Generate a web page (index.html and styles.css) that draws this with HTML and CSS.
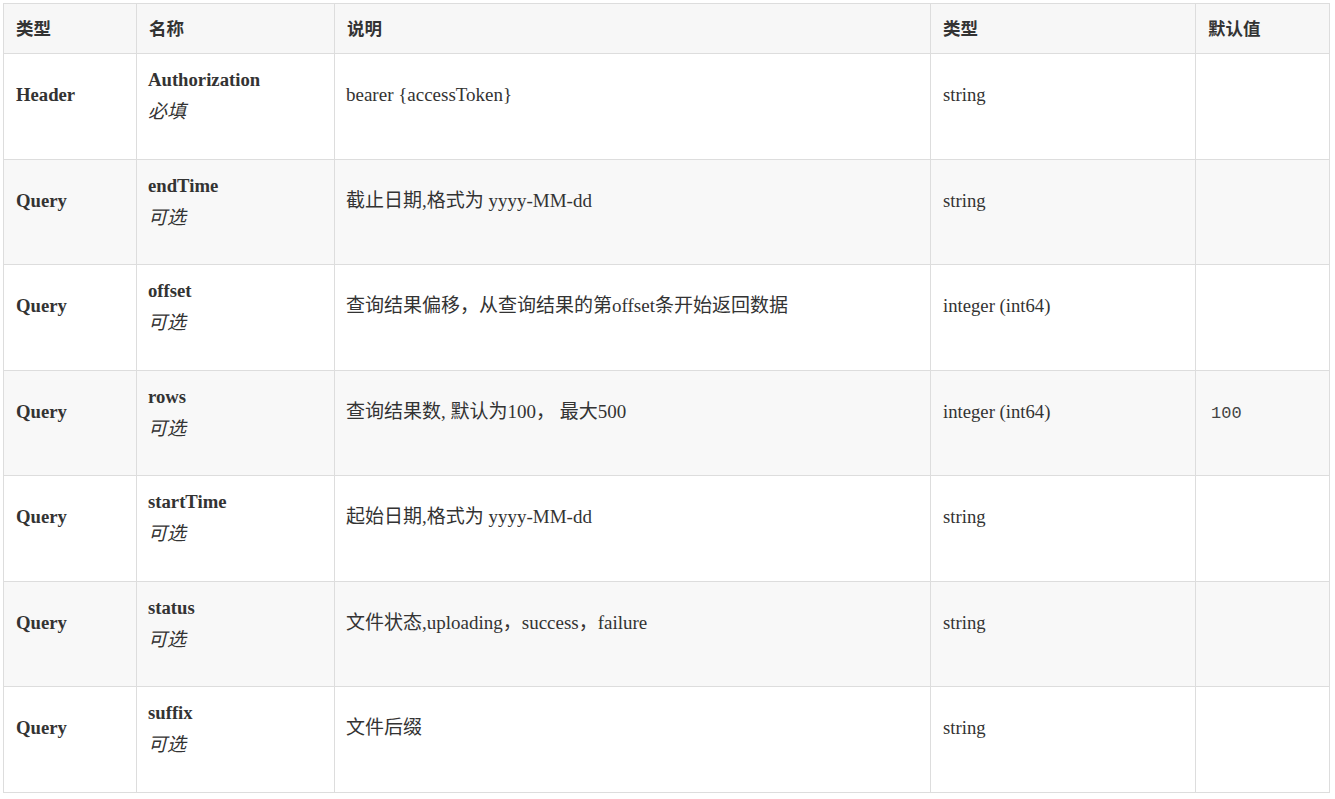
FILE: index.html
```html
<!DOCTYPE html>
<html lang="zh-CN">
<head>
<meta charset="utf-8">
<title>参数</title>
<link rel="stylesheet" href="styles.css">
</head>
<body>
<table class="params">
  <colgroup>
    <col class="c-in">
    <col class="c-name">
    <col class="c-desc">
    <col class="c-type">
    <col class="c-def">
  </colgroup>
  <thead>
    <tr><th>类型</th><th>名称</th><th>说明</th><th>类型</th><th>默认值</th></tr>
  </thead>
  <tbody>
    <tr>
      <td class="in">Header</td>
      <td class="name"><strong>Authorization</strong><br><em>必填</em></td>
      <td class="desc">bearer {accessToken}</td>
      <td>string</td>
      <td></td>
    </tr>
    <tr>
      <td class="in">Query</td>
      <td class="name"><strong>endTime</strong><br><em>可选</em></td>
      <td class="desc">截止日期,格式为 yyyy-MM-dd</td>
      <td>string</td>
      <td></td>
    </tr>
    <tr>
      <td class="in">Query</td>
      <td class="name"><strong>offset</strong><br><em>可选</em></td>
      <td class="desc">查询结果偏移，从查询结果的第offset条开始返回数据</td>
      <td>integer (int64)</td>
      <td></td>
    </tr>
    <tr>
      <td class="in">Query</td>
      <td class="name"><strong>rows</strong><br><em>可选</em></td>
      <td class="desc">查询结果数, 默认为100， 最大500</td>
      <td>integer (int64)</td>
      <td><code>100</code></td>
    </tr>
    <tr>
      <td class="in">Query</td>
      <td class="name"><strong>startTime</strong><br><em>可选</em></td>
      <td class="desc">起始日期,格式为 yyyy-MM-dd</td>
      <td>string</td>
      <td></td>
    </tr>
    <tr>
      <td class="in">Query</td>
      <td class="name"><strong>status</strong><br><em>可选</em></td>
      <td class="desc">文件状态,uploading，success，failure</td>
      <td>string</td>
      <td></td>
    </tr>
    <tr>
      <td class="in">Query</td>
      <td class="name"><strong>suffix</strong><br><em>可选</em></td>
      <td class="desc">文件后缀</td>
      <td>string</td>
      <td></td>
    </tr>
  </tbody>
</table>
</body>
</html>
```
FILE: styles.css
```css
html, body {
  margin: 0;
  padding: 0;
  background: #ffffff;
}
body {
  padding: 3px 0 0 3px;
  color: #333333;
  font-family: "Liberation Serif", "Noto Sans CJK SC", serif;
  font-size: 18.7px;
}
.params {
  border-collapse: collapse;
  table-layout: fixed;
  width: 1326px;
}
.c-in { width: 133px; }
.c-name { width: 198px; }
.c-desc { width: 596px; }
.c-type { width: 265px; }
.c-def { width: 134px; }

.params th,
.params td {
  border: 1px solid #dddddd;
  text-align: left;
  vertical-align: top;
}
.params th {
  background: #f7f7f7;
  font-family: "Noto Sans CJK SC", sans-serif;
  font-weight: bold;
  font-size: 17.5px;
  line-height: 24px;
  height: 50px;
  box-sizing: border-box;
  padding: 12px 12px 0 12px;
}
.params td {
  height: 105.5px;
  box-sizing: border-box;
  padding: 26px 12px 0 12px;
  line-height: 30px;
}
.params tbody tr:nth-child(even) td {
  background: #f8f8f8;
}
.params td.in {
  font-weight: bold;
}
.params td.desc {
  font-size: 19px;
  padding-left: 11px;
}
.params td.name {
  padding-top: 11px;
  padding-left: 11px;
}
.params td.name strong {
  font-weight: bold;
}
.params td.name em {
  font-family: "Noto Sans CJK SC", sans-serif;
  font-style: italic;
  font-size: 19px;
}
.params code {
  font-family: "Liberation Mono", monospace;
  font-size: 17px;
  padding: 0 3px;
  color: #444444;
}
```
